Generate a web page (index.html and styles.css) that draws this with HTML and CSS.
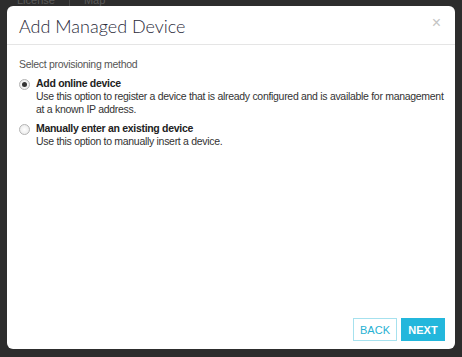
FILE: index.html
```html
<!DOCTYPE html>
<html>
<head>
<meta charset="utf-8">
<link rel="stylesheet" href="styles.css">
</head>
<body>
<div class="backdrop">
  <div class="behind"><span class="tab">License</span><span class="tab sep">Map</span></div>
  <div class="modal">
    <div class="modal-header">
      <h1 class="title">Add Managed Device</h1>
      <span class="close">&times;</span>
    </div>
    <div class="modal-body">
      <div class="label">Select provisioning method</div>
      <label class="option">
        <span class="radio checked"></span>
        <span class="opt-text">
          <span class="opt-title">Add online device</span>
          <span class="opt-desc">Use this option to register a device that is already configured and is available for management at a known IP address.</span>
        </span>
      </label>
      <label class="option">
        <span class="radio"></span>
        <span class="opt-text">
          <span class="opt-title">Manually enter an existing device</span>
          <span class="opt-desc">Use this option to manually insert a device.</span>
        </span>
      </label>
    </div>
    <div class="modal-footer">
      <button class="btn btn-back">BACK</button>
      <button class="btn btn-next">NEXT</button>
    </div>
  </div>
</div>
</body>
</html>
```
FILE: styles.css
```css
html, body {
  margin: 0;
  padding: 0;
  width: 462px;
  height: 357px;
  overflow: hidden;
  background: #2d2d2d;
}
.backdrop {
  position: relative;
  box-sizing: border-box;
  width: 462px;
  height: 357px;
  padding: 6px 7px 8px 7px;
  display: flex;
  flex-direction: column;
}
.behind {
  position: absolute;
  top: -6px;
  left: 17px;
  font: 11px "Liberation Sans", Arial, sans-serif;
  line-height: 12px;
  color: #5a5a5a;
  display: flex;
  gap: 14px;
}
.sep {
  border-left: 1px solid #474747;
  padding-left: 14px;
}
.modal {
  position: relative;
  flex: 1;
  background: #fff;
  border-radius: 6px;
  display: flex;
  flex-direction: column;
  font-family: "Liberation Sans", Arial, sans-serif;
}
.modal-header {
  height: 38px;
  border-bottom: 1px solid #e5e5e5;
  display: flex;
  align-items: center;
  justify-content: space-between;
  padding: 0 14px 0 12px;
}
.title {
  margin: 0;
  font-family: Lato, "Open Sans", sans-serif;
  font-weight: 300;
  font-size: 18px;
  color: #2a2a3a;
  letter-spacing: 0;
  padding-top: 1px;
}
.close {
  font-size: 16px;
  color: #c4c4c4;
  line-height: 1;
  margin-top: -4px;
}
.modal-body {
  flex: 1;
  padding: 13px 10px 0 12px;
  font-size: 10.5px;
  letter-spacing: -0.3px;
  color: #333;
}
.label {
  color: #555;
  line-height: 13px;
  margin-bottom: 6px;
}
.option {
  display: flex;
  gap: 6px;
  margin-bottom: 6px;
}
.radio {
  flex: none;
  width: 9px;
  height: 9px;
  border: 1px solid #b4b4b4;
  border-radius: 50%;
  margin: 2px 0 0 0;
  background: radial-gradient(circle, #fff 0, #e6e6e6 100%);
  box-sizing: content-box;
  display: flex;
  align-items: center;
  justify-content: center;
}
.radio.checked::after {
  content: "";
  width: 5px;
  height: 5px;
  border-radius: 50%;
  background: #333;
}
.opt-text {
  display: flex;
  flex-direction: column;
  line-height: 13px;
}
.opt-title {
  font-weight: bold;
  color: #222;
}
.opt-desc {
  color: #333;
}
.modal-footer {
  display: flex;
  justify-content: flex-end;
  gap: 4px;
  padding: 0 10px 8px 0;
}
.btn {
  height: 23px;
  width: 44px;
  padding: 0;
  font-family: "Liberation Sans", Arial, sans-serif;
  font-size: 11px;
  border-radius: 0;
  cursor: pointer;
}
.btn-back {
  background: #fff;
  border: 1px solid #a6e1ee;
  color: #27b1d2;
}
.btn-next {
  background: #23b7dc;
  border: 1px solid #23b7dc;
  color: #fff;
  font-weight: bold;
}
```
